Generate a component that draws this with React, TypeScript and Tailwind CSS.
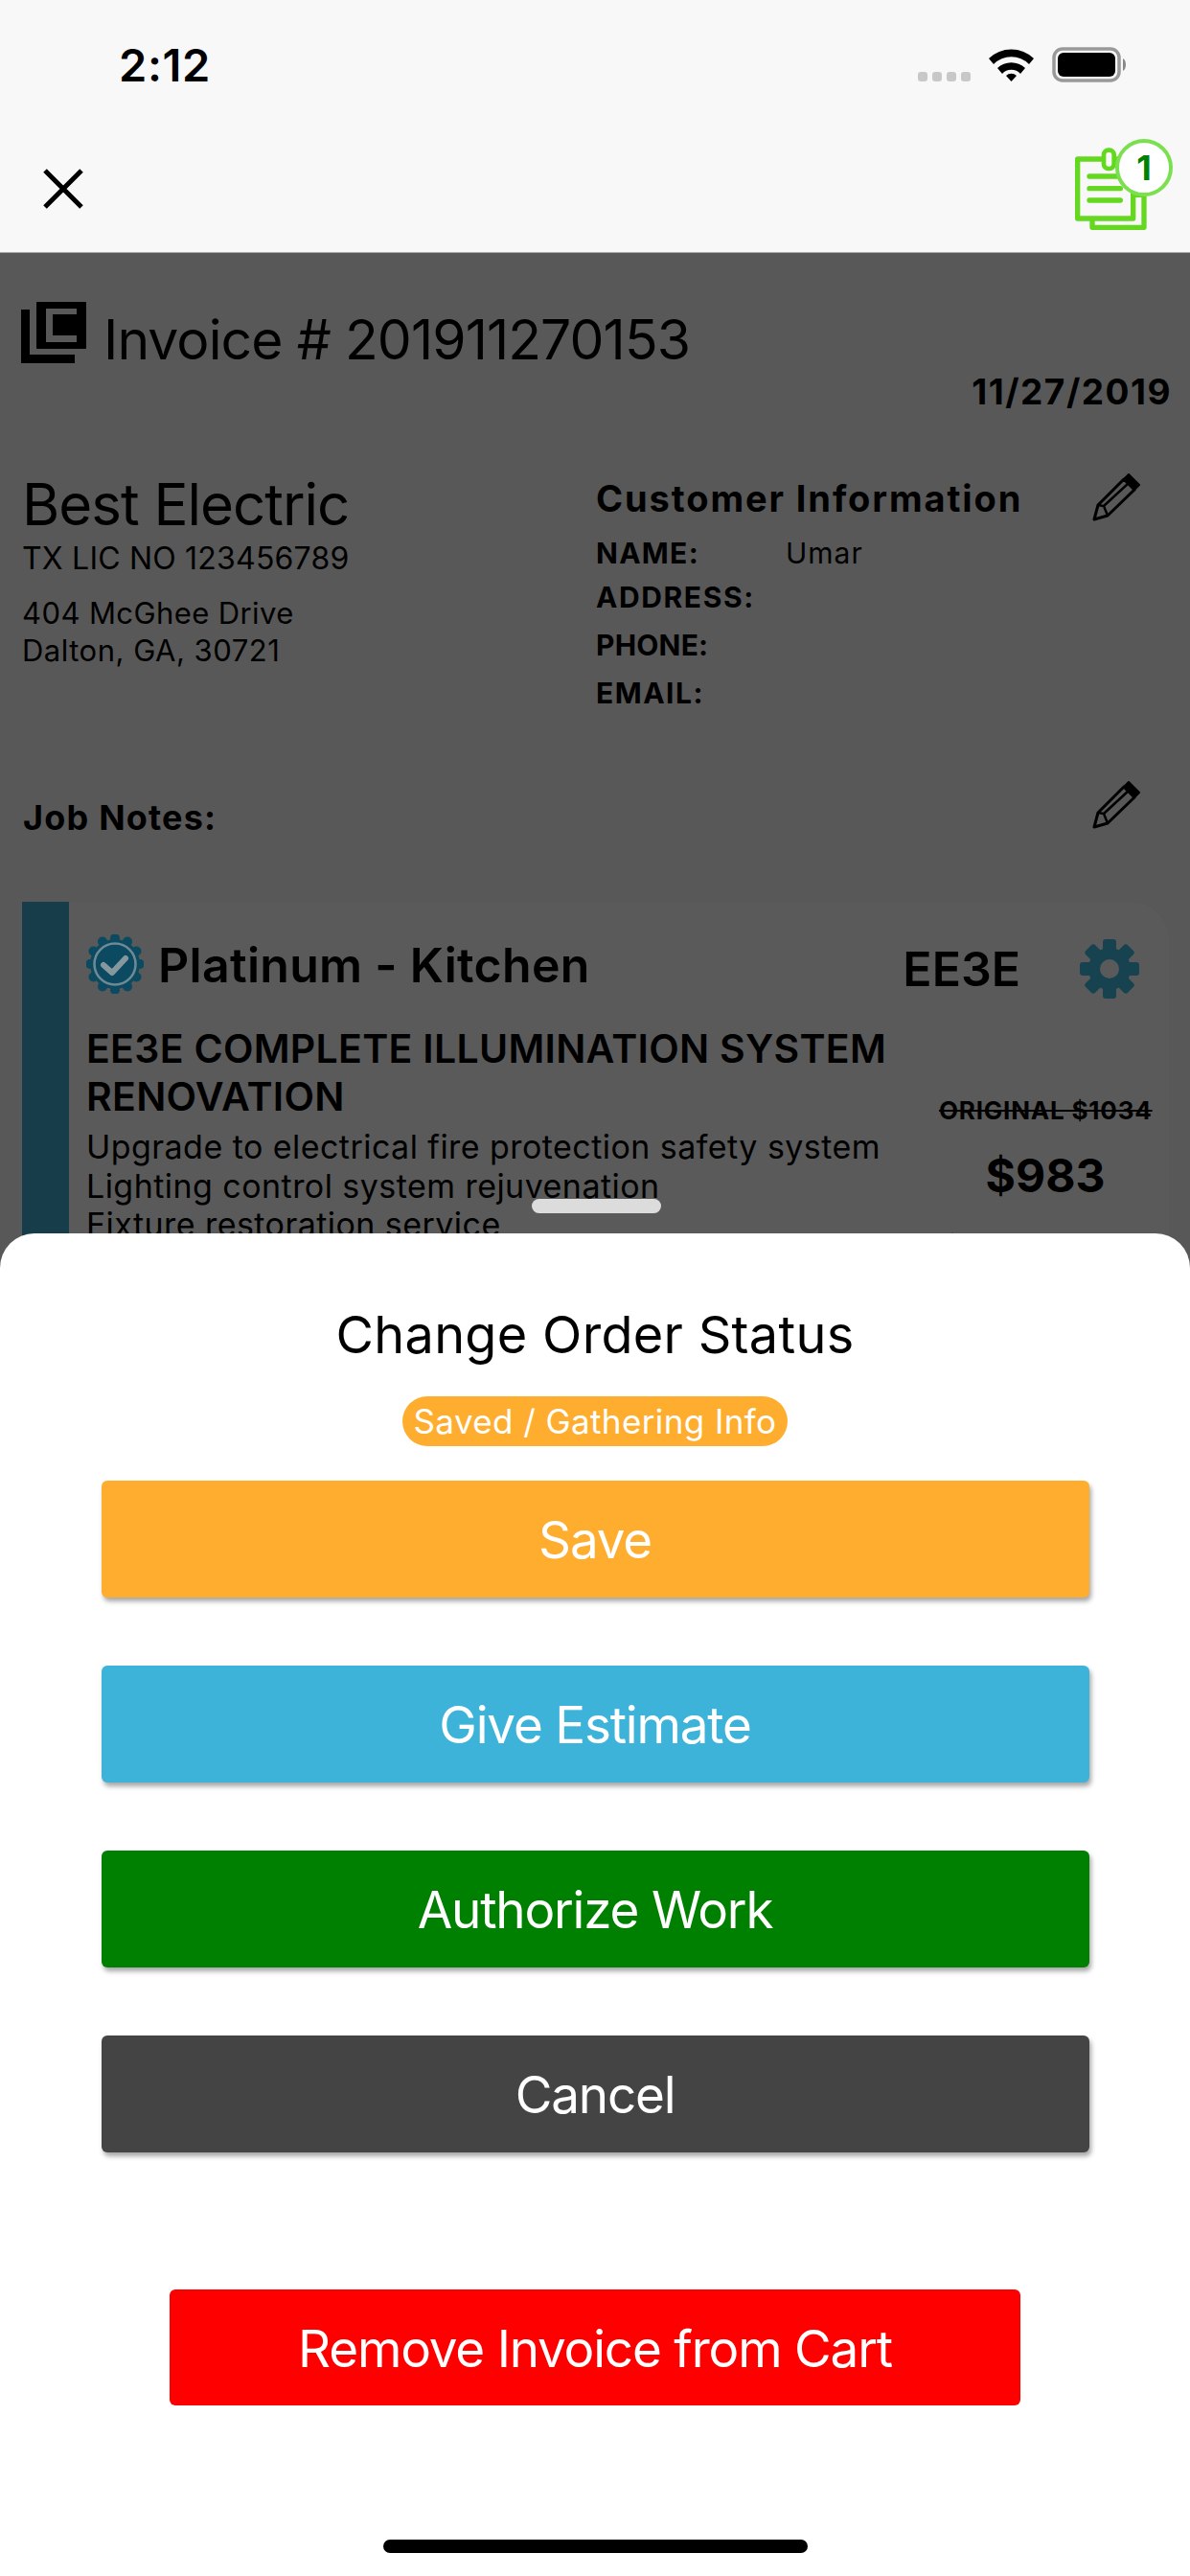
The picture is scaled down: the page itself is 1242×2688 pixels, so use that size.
import React from 'react';

const buttons = [
  { label: 'Save', color: 'bg-[#ffad2e]' },
  { label: 'Give Estimate', color: 'bg-[#3db3d9]' },
  { label: 'Authorize Work', color: 'bg-[#008000]' },
  { label: 'Cancel', color: 'bg-[#444444]' },
];

function Pencil() {
  return (
    <svg width="50" height="50" viewBox="0 0 50 50" className="block">
      <path d="M38 1 L49 12 L44 17 L33 6 Z" fill="#000" stroke="#000" strokeWidth="2" strokeLinejoin="round" />
      <path d="M33 6 L44 17 L16 44 L2 48 L6 33 Z" fill="none" stroke="#000" strokeWidth="3" strokeLinejoin="round" />
      <path d="M6 33 L12 34 L16 44 M12 34 L38 10" fill="none" stroke="#000" strokeWidth="2.5" />
    </svg>
  );
}

function Gear() {
  return (
    <svg width="62" height="62" viewBox="0 0 62 62" className="block">
      {[0, 45, 90, 135].map((a) => (
        <rect key={a} x="24" y="0" width="14" height="62" rx="3" fill="#174250" transform={`rotate(${a} 31 31)`} />
      ))}
      <circle cx="31" cy="31" r="22" fill="#174250" />
      <circle cx="31" cy="31" r="10" fill="#5a5a5a" />
    </svg>
  );
}

function Seal() {
  const pts = Array.from({ length: 12 }, (_, i) => {
    const a = (i * Math.PI) / 6 - Math.PI / 2;
    return `${(30 + 26 * Math.cos(a)).toFixed(1)},${(31 + 27 * Math.sin(a)).toFixed(1)}`;
  });
  return (
    <svg width="60" height="62" viewBox="0 0 60 62" className="block">
      {pts.map((p) => {
        const [cx, cy] = p.split(',');
        return <circle key={p} cx={cx} cy={cy} r="5" fill="#0b4a60" />;
      })}
      <circle cx="30" cy="31" r="26" fill="#0b4a60" />
      <circle cx="30" cy="31" r="21.5" fill="none" stroke="#6f8a94" strokeWidth="2.5" />
      <path d="M18 32 L27 40 L41 25" fill="none" stroke="#87979e" strokeWidth="6" strokeLinecap="round" strokeLinejoin="round" />
    </svg>
  );
}

function Logo() {
  return (
    <svg width="68" height="64" viewBox="0 0 68 64" className="block shrink-0">
      <rect x="16" y="0" width="52" height="49" rx="1" fill="#000" />
      <path d="M26 7 H58 V13 H33 V35 H58 V42 H26 Z" fill="#585858" />
      <path d="M0 8 H9 V55 H56 V64 H0 Z" fill="#000" />
    </svg>
  );
}

function CartIcon() {
  return (
    <svg width="152" height="130" viewBox="0 0 456 390" className="block">
      <path d="M285 250 H312 V352 H150 V330" fill="none" stroke="#63d81e" strokeWidth="16" strokeLinejoin="round" />
      <rect x="104" y="138" width="174" height="186" fill="none" stroke="#63d81e" strokeWidth="16" strokeLinejoin="round" />
      <rect x="186" y="110" width="32" height="58" rx="14" fill="#f8f8f8" stroke="#63d81e" strokeWidth="14" />
      <path d="M141 192 H238 M141 230 H238 M141 267 H238" stroke="#63d81e" strokeWidth="16" strokeLinecap="round" />
    </svg>
  );
}

export default function App() {
  return (
    <div className="relative h-[2688px] w-[1242px] overflow-hidden bg-[#585858] text-black [font-family:Inter,sans-serif]">
      <div className="h-[264px] bg-[#f8f8f8] border-b border-[#a8a8a8]">
        <div className="flex h-[120px] items-start pl-[124px] pr-[65px] pt-[49px]">
          <div className="-mt-[5px] text-[47px] font-semibold leading-[48px] tracking-[0.6px]">2:12</div>
          <div className="ml-auto flex items-start gap-[19px]">
            <div className="mt-[26px] flex gap-[5px]">
              {[0, 1, 2, 3].map((i) => (
                <div key={i} className="h-[10px] w-[10px] rounded-[3px] bg-[#c8c8c8]" />
              ))}
            </div>
            <svg width="47" height="35" viewBox="0 0 47 35" className="mt-[1px] block">
              <path d="M0 11 A34 34 0 0 1 47 11 L42 17 A26 26 0 0 0 5 17 Z" fill="#000" />
              <path d="M9 21 A21 21 0 0 1 38 21 L33 27 A13 13 0 0 0 14 27 Z" fill="#000" />
              <path d="M18 29 A8 8 0 0 1 29 29 L23.5 35 Z" fill="#000" />
            </svg>
            <svg width="79" height="37" viewBox="0 0 79 37" className="block">
              <rect x="2" y="2" width="68" height="33" rx="9" fill="none" stroke="#999" strokeWidth="3.5" />
              <rect x="6" y="6" width="60" height="25" rx="6" fill="#000" />
              <path d="M74 12 C78 14 78 23 74 25 Z" fill="#888" />
            </svg>
          </div>
        </div>
        <div className="flex h-[143px] items-start justify-between">
          <svg width="42" height="42" viewBox="0 0 42 42" className="ml-[45px] mt-[56px] block">
            <path d="M2 2 L40 40 M40 2 L2 40" stroke="#000" strokeWidth="5" />
          </svg>
          <div className="relative">
            <CartIcon />
            <div className="absolute left-[74px] top-[25px] flex h-[60px] w-[60px] items-center justify-center rounded-full border-[4px] border-[#7be04f] bg-white text-[36px] font-bold leading-none text-[#008000]">
              1
            </div>
          </div>
        </div>
      </div>

      <div className="h-[196px] pl-[22px] pr-[19px] pt-[51px]">
        <div className="flex items-start">
          <Logo />
          <div className="ml-[18px] mt-[8px] text-[57px] leading-[64px] tracking-[-0.9px]">Invoice # 201911270153</div>
        </div>
        <div className="mt-[2px] text-right text-[37px] font-bold leading-[40px] tracking-[1.5px]">11/27/2019</div>
      </div>

      <div className="flex h-[330px] pl-[23px] pr-[52px]">
        <div className="w-[599px] pt-[34px]">
          <div className="text-[60px] leading-[64px] tracking-[-1px]">Best Electric</div>
          <div className="mt-[5px] text-[32px] leading-[40px] tracking-[0.2px]">TX LIC NO 123456789</div>
          <div className="mt-[17px] text-[31px] leading-[39px] tracking-[0.4px]">404 McGhee Drive</div>
          <div className="text-[31px] leading-[39px] tracking-[0.5px]">Dalton, GA, 30721</div>
        </div>
        <div className="flex-1 pt-[38px]">
          <div className="text-[38px] font-bold leading-[44px] tracking-[1.9px]">Customer Information</div>
          <div className="mt-[20px] flex text-[30px] leading-[30px]">
            <div className="w-[198px] font-bold tracking-[1.3px]">NAME:</div>
            <div className="tracking-[1px]">Umar</div>
          </div>
          <div className="mt-[16px] text-[30px] font-bold leading-[30px] tracking-[1.6px]">ADDRESS:</div>
          <div className="mt-[20px] text-[30px] font-bold leading-[30px] tracking-[0.2px]">PHONE:</div>
          <div className="mt-[20px] text-[30px] font-bold leading-[30px] tracking-[1.5px]">EMAIL:</div>
        </div>
        <div className="pt-[34px]">
          <Pencil />
        </div>
      </div>

      <div className="flex h-[130px] items-start justify-between pl-[24px] pr-[52px]">
        <div className="mt-[41px] text-[36px] font-bold leading-[44px] tracking-[1.2px]">Job Notes:</div>
        <div className="mt-[25px]">
          <Pencil />
        </div>
      </div>

      <div className="ml-[23px] mr-[22px] mt-[21px] flex h-[500px] rounded-tr-[40px] bg-[#5a5a5a]">
        <div className="w-[49px] shrink-0 bg-[#173d4a]" />
        <div className="flex-1 pl-[18px] pr-[10px] pt-[34px]">
          <div className="flex items-start pr-[21px]">
            <Seal />
            <div className="ml-[15px] mt-[4px] text-[50px] font-semibold leading-[56px] tracking-[0.3px]">Platinum - Kitchen</div>
            <div className="ml-auto mt-[8px] text-[50px] font-semibold leading-[56px]">EE3E</div>
            <div className="ml-[62px] mt-[5px]">
              <Gear />
            </div>
          </div>
          <div className="flex">
            <div className="w-[888px] pt-[27px]">
              <div className="text-[41px] font-semibold leading-[50px] tracking-[0.3px]">
                EE3E COMPLETE ILLUMINATION SYSTEM RENOVATION
              </div>
              <div className="mt-[8px] text-[34px] leading-[40.5px] tracking-[0.45px]">
                <div>Upgrade to electrical fire protection safety system</div>
                <div>Lighting control system rejuvenation</div>
                <div>Fixture restoration service</div>
              </div>
            </div>
            <div className="ml-[2px] w-[222px] pt-[102px] text-center">
              <div className="whitespace-nowrap text-[26px] font-bold leading-[30px] tracking-[0.8px] line-through">ORIGINAL $1034</div>
              <div className="mt-[25px] text-[48px] font-bold leading-[56px]">$983</div>
              <div className="mt-[29px] pl-[6px] text-left text-[24px] font-semibold leading-[30px]">$</div>
            </div>
          </div>
        </div>
      </div>

      <div className="absolute inset-x-0 bottom-0 flex h-[1401px] flex-col items-center rounded-t-[36px] bg-white pt-[74px]">
        <div className="absolute -top-[36px] left-[555px] h-[15px] w-[135px] rounded-full bg-[#dcdcdc]" />
        <div className="text-[54px] leading-[64px] tracking-[0.3px]">Change Order Status</div>
        <div className="mt-[32px] flex h-[52px] w-[402px] items-center justify-center rounded-full bg-[#ffad2e] text-[35px] leading-none tracking-[0.4px] text-white">
          Saved / Gathering Info
        </div>
        <div className="mt-[36px] flex flex-col gap-[71px]">
          {buttons.map((b) => (
            <div
              key={b.label}
              className={`flex h-[122px] w-[1031px] items-center justify-center rounded-[6px] pt-[4px] text-[53px] tracking-[-1.2px] text-white shadow-[2px_4px_5px_rgba(0,0,0,0.35)] ${b.color}`}
            >
              {b.label}
            </div>
          ))}
        </div>
        <div className="mt-[143px] flex h-[121px] w-[888px] items-center justify-center rounded-[6px] bg-[#ff0000] pt-[4px] text-[53px] tracking-[-1.2px] text-white">
          Remove Invoice from Cart
        </div>
        <div className="mt-[140px] h-[14px] w-[443px] rounded-full bg-black" />
      </div>
    </div>
  );
}
